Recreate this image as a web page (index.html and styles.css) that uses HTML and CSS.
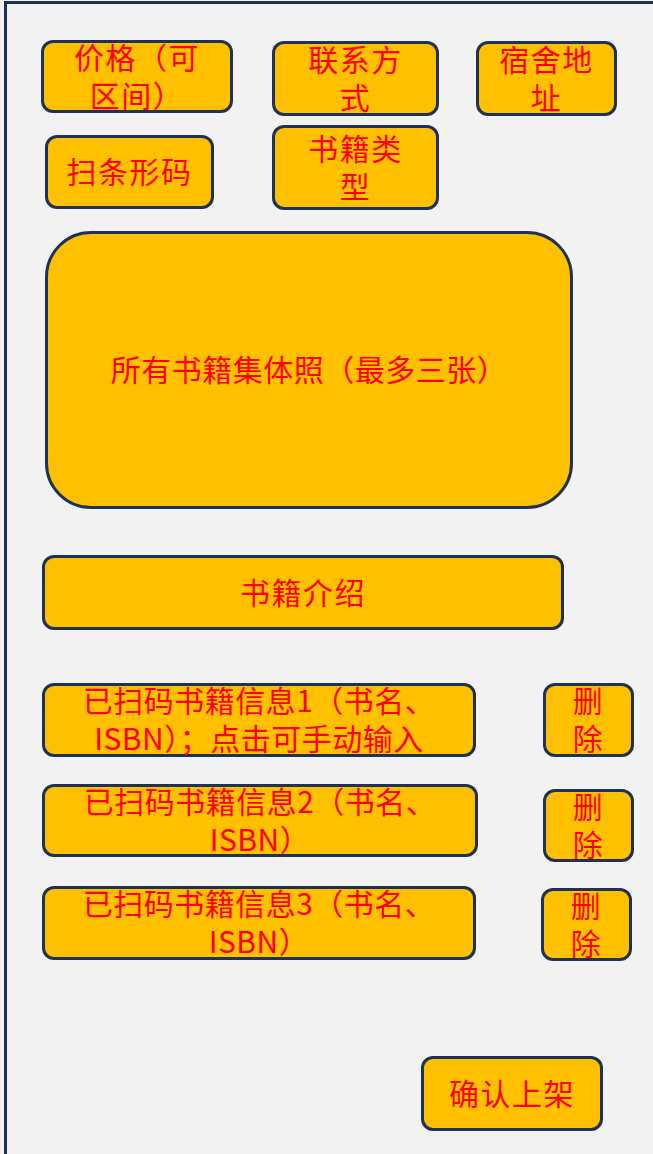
FILE: index.html
```html
<!DOCTYPE html>
<html lang="zh-CN">
<head>
<meta charset="utf-8">
<title>书籍上架</title>
<link rel="stylesheet" href="styles.css">
</head>
<body>
<div class="frame">
  <div class="row row-1">
    <div class="box price">价格（可<br>区间）</div>
    <div class="box contact">联系方<br>式</div>
    <div class="box dorm">宿舍地<br>址</div>
  </div>
  <div class="row row-2">
    <div class="box barcode">扫条形码</div>
    <div class="box type">书籍类<br>型</div>
  </div>
  <div class="box photo">所有书籍集体照（最多三张）</div>
  <div class="box intro">书籍介绍</div>
  <div class="row entry entry-1">
    <div class="box info">已扫码书籍信息1（书名、<br>ISBN）；点击可手动输入</div>
    <div class="box del">删<br>除</div>
  </div>
  <div class="row entry entry-2">
    <div class="box info info-2">已扫码书籍信息2（书名、<br>ISBN）</div>
    <div class="box del del-2">删<br>除</div>
  </div>
  <div class="row entry entry-3">
    <div class="box info">已扫码书籍信息3（书名、<br>ISBN）</div>
    <div class="box del del-3">删<br>除</div>
  </div>
  <div class="box confirm">确认上架</div>
</div>
</body>
</html>
```

FILE: styles.css
```css
* { box-sizing: border-box; }

html, body {
  margin: 0;
  padding: 0;
  background: #f2f2f2;
}

body {
  font-family: "Noto Sans CJK SC", "Noto Sans", sans-serif;
  color: #ff0000;
  overflow: hidden;
}

.frame {
  margin: 1px 0 0 4px;
  height: 1153px;
  border-top: 3px solid #1e3257;
  border-left: 3px solid #1e3257;
  display: flex;
  flex-direction: column;
  align-items: flex-start;
}

.row {
  display: flex;
  align-items: flex-start;
}

.box {
  background: #ffc000;
  border: 3px solid #1e3257;
  border-radius: 12px;
  display: flex;
  align-items: center;
  justify-content: center;
  text-align: center;
  font-size: 30px;
  letter-spacing: 1.5px;
  line-height: 38px;
  padding-bottom: 4px;
  white-space: nowrap;
  overflow: visible;
}

/* row 1 */
.row-1 { margin-top: 36px; }
.price { margin-left: 34px; width: 192px; height: 73px; }
.contact { margin-left: 39px; margin-top: 1px; width: 167px; height: 75px; }
.dorm { margin-left: 37px; margin-top: 1px; width: 141px; height: 75px; }

/* row 2 */
.row-2 { margin-top: 9px; }
.barcode { margin-left: 38px; margin-top: 10px; width: 169px; height: 74px; }
.type { margin-left: 58px; width: 167px; height: 85px; }

.photo {
  margin: 21px 0 0 38px;
  width: 528px;
  height: 278px;
  border-radius: 46px;
  letter-spacing: 0.5px;
}

.intro {
  margin: 46px 0 0 35px;
  width: 522px;
  height: 75px;
}

.entry-1 { margin-top: 53px; }
.entry-2 { margin-top: 27px; }
.entry-3 { margin-top: 24px; }

.info { margin-left: 35px; width: 434px; height: 74px; letter-spacing: 0.5px; }
.info-2 { width: 436px; height: 73px; }
.del { margin-left: 67px; width: 91px; height: 74px; }
.del-2 { margin-left: 65px; margin-top: 5px; height: 73px; }
.del-3 { margin-left: 65px; margin-top: 2px; height: 73px; }

.confirm {
  margin: 95px 0 0 414px;
  width: 182px;
  height: 75px;
}
```
